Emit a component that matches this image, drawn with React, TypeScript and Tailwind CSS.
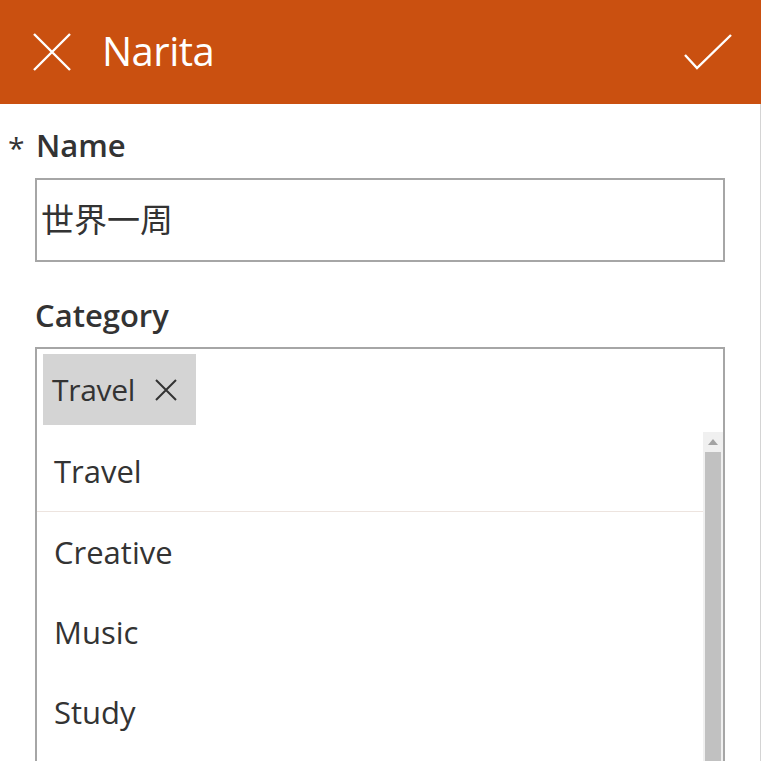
import { useState } from 'react';

const CATEGORIES = ['Travel', 'Creative', 'Music', 'Study'];

const FONT = "font-['Open_Sans','Noto_Sans_CJK_JP',sans-serif]";

export default function App() {
  const [name, setName] = useState('世界一周');

  return (
    <div className={`relative h-[761px] w-[761px] overflow-hidden bg-white text-[#333333] ${FONT}`}>
      {/* header bar */}
      <header className="flex h-[104px] items-center bg-[#ca5010] text-white">
        <button type="button" aria-label="Close" className="ml-[33px] h-[38px] w-[38px]">
          <svg viewBox="0 0 38 38" className="h-[38px] w-[38px]" fill="none" stroke="white" strokeWidth="2.4">
            <path d="M1 1 L37 37 M37 1 L1 37" />
          </svg>
        </button>
        <h1 className="ml-[31px] text-[40px] leading-none tracking-[-0.5px] pb-[2px]">Narita</h1>
        <button type="button" aria-label="Save" className="ml-auto mr-[28px] h-[38px] w-[50px]">
          <svg viewBox="0 0 50 38" className="h-[38px] w-[50px]" fill="none" stroke="white" strokeWidth="2.4">
            <path d="M2 22 L14 35 L48 2" />
          </svg>
        </button>
      </header>

      <main className="flex h-[657px] flex-col border-r border-[#d4d4d4] px-[35px]">
        {/* Name */}
        <div className="-ml-[27px] mt-[23px] flex h-[36px] items-center">
          <span className="w-[28px] text-[30px] leading-none pt-[6px]">*</span>
          <label className="text-[31px] font-semibold leading-none">Name</label>
        </div>
        <input
          value={name}
          onChange={(e) => setName(e.target.value)}
          className="mt-[15px] h-[84px] w-full border-2 border-[#a6a6a6] pl-[4px] pb-[4px] text-[33px] text-[#333333] outline-none font-['Noto_Sans_CJK_JP',sans-serif]"
        />

        {/* Category */}
        <div className="mt-[35px] flex h-[36px] items-center">
          <label className="text-[31px] font-semibold leading-none">Category</label>
        </div>
        <div className="mt-[14px] flex h-[85px] items-start border-x-2 border-t-2 border-[#a6a6a6] px-[6px] pt-[5px]">
          <span className="flex h-[71px] items-center bg-[#d4d4d4] pl-[9px] pr-[19px]">
            <span className="text-[30px] leading-none tracking-[-0.3px]">Travel</span>
            <svg viewBox="0 0 22 22" className="ml-[20px] h-[22px] w-[22px]" fill="none" stroke="#333333" strokeWidth="2">
              <path d="M1 1 L21 21 M21 1 L1 21" />
            </svg>
          </span>
        </div>

        {/* dropdown list */}
        <div className="flex min-h-0 flex-1 border-x-2 border-[#a6a6a6]">
          <ul className="flex-1">
            {CATEGORIES.map((c, i) => (
              <li
                key={c}
                className={`flex h-[80px] items-center pl-[17px] text-[31px] leading-none ${
                  i === 0 ? 'border-b border-[#ede4df]' : ''
                }`}
              >
                {c}
              </li>
            ))}
          </ul>
          <div className="flex w-[20px] flex-col bg-[#f0f0f0]">
            <div className="flex h-[20px] items-center justify-center">
              <svg viewBox="0 0 10 6" className="h-[6px] w-[10px]">
                <path d="M0 6 L5 0 L10 6 Z" fill="#a3a3a3" />
              </svg>
            </div>
            <div className="mx-[2px] flex-1 bg-[#c1c1c1]" />
          </div>
        </div>
      </main>
    </div>
  );
}
